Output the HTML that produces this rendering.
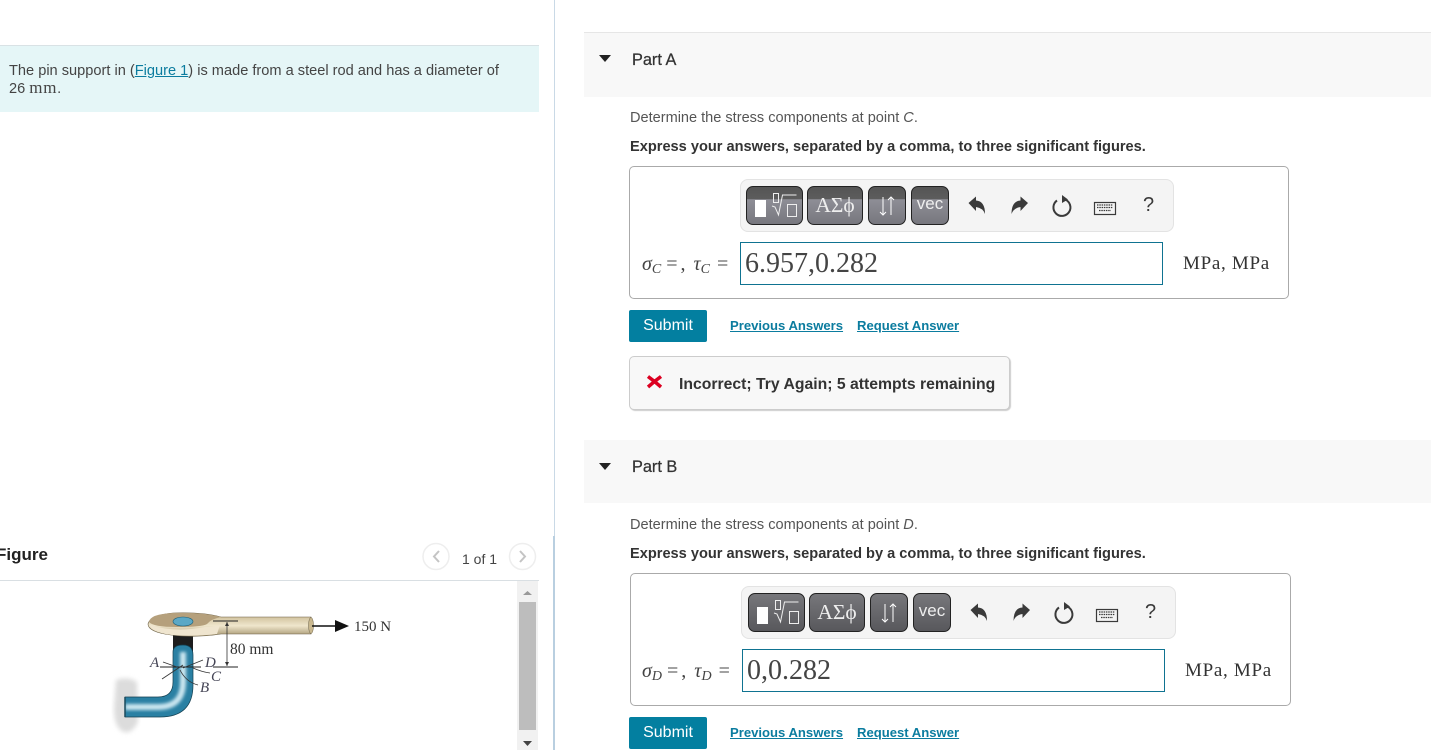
<!DOCTYPE html>
<html><head><meta charset="utf-8"><style>
html,body{margin:0;padding:0;background:#fff;overflow:hidden}
body{width:1431px;height:750px;position:relative;font-family:"Liberation Sans",sans-serif;color:#333}
.a{position:absolute;white-space:nowrap}
a{color:#0b7c9f;text-decoration:underline}
.hd{left:584px;width:847px;background:#f8f8f8}
.tri{width:0;height:0;border-left:6px solid transparent;border-right:6px solid transparent;border-top:7px solid #222}
.pt{font-size:16.3px;line-height:20px;color:#333;-webkit-text-stroke:.25px #333}
.det{font-size:14.56px;line-height:18px;color:#555}
.exp{font-size:14.6px;line-height:18px;font-weight:bold;color:#333}
.box{border:1px solid #aaa;border-radius:5px;background:#fff;box-sizing:border-box}
.tb{left:110px;top:12px;width:434px;height:53px;background:#f4f4f4;border:1px solid #e3e3e3;border-radius:8px;box-sizing:border-box}
.b{position:absolute;top:6px;height:39px;box-sizing:border-box;border:1px solid #222;border-radius:7px;background:linear-gradient(#555 0,#5c5c5c 32%,#8e8e96 34%,#77777e 100%);color:#eee;text-align:center}
.b2{background:linear-gradient(#77777b,#58585c)}
.inp{height:43px;border:1px solid #0f7391;box-sizing:border-box;background:#fff;font:28px/42px "Liberation Serif",serif;color:#444;padding-left:4px}
.lab{font:italic 20px/24px "Liberation Serif",serif;color:#444}
.lab sub{font-size:14px;vertical-align:-3px;line-height:0}
.lab i.n{font-style:normal}
.unit{font:19px/24px "Liberation Serif",serif;color:#333;letter-spacing:.7px}
.sub{left:629px;width:78px;height:32px;background:#037fa0;border-radius:2px;color:#fff;font-size:16px;line-height:32px;text-align:center}
.lk{font-size:13.1px;font-weight:bold;line-height:16px}
</style></head><body>

<div class="a" style="left:554px;top:0;width:1px;height:537px;background:#c9d9e6"></div>
<div class="a" style="left:553px;top:536px;width:2px;height:214px;background:#b9cfe0"></div>

<!-- left panel -->
<div class="a" style="left:0;top:45px;width:539px;height:67px;background:#e5f6f7;border-top:1px solid #d9e2e5;box-sizing:border-box"></div>
<div class="a" style="left:9px;top:62px;font-size:14.6px;line-height:18px;color:#444">The pin support in (<a>Figure 1</a>) is made from a steel rod and has a diameter of<br><span style="position:relative;top:-1px">26 <span style="font-family:'Liberation Serif',serif;font-size:17px;letter-spacing:.7px">mm</span>.</span></div>

<div class="a" style="left:-4px;top:545px;font-size:17px;line-height:20px;font-weight:bold;color:#222">Figure</div>
<div class="a" style="left:462px;top:550px;font-size:14px;line-height:18px;color:#444">1 of 1</div>
<svg class="a" style="left:0;top:530px" width="553" height="220" viewBox="0 530 553 220">
<defs>
<linearGradient id="rod" x1="0" x2="0" y1="0" y2="1"><stop offset="0" stop-color="#c4b28a"/><stop offset=".55" stop-color="#efe6cc"/><stop offset="1" stop-color="#a4946f"/></linearGradient>
<filter id="bl"><feGaussianBlur stdDeviation="2.500"/></filter>
<filter id="bs"><feGaussianBlur stdDeviation="1.500"/></filter>
</defs>
<circle cx="436" cy="556.500" r="13" fill="#fff" stroke="#eee" stroke-width="1.500"/>
<circle cx="522.500" cy="556.500" r="13" fill="#fff" stroke="#eee" stroke-width="1.500"/>
<path d="M439 551l-5 5.500 5 5.500" fill="none" stroke="#c4c4c4" stroke-width="2"/>
<path d="M520 551l5 5.500-5 5.500" fill="none" stroke="#c4c4c4" stroke-width="2"/>
<rect x="0" y="580" width="539" height="1" fill="#d9dfe3"/>
<rect x="517" y="581" width="21" height="169" fill="#f1f1f1"/>
<rect x="519" y="602" width="17" height="128" fill="#bdbdbd"/>
<path d="M523 595l4.500-4 4.500 4z" fill="#999"/>
<path d="M523 741h9l-4.500 5z" fill="#444"/>
<path d="M116 680q12-4 21 2l1 40q-6 12-14 10-10-4-10-24z" fill="#dcdcdc" filter="url(#bl)"/>
<path d="M173 634h20v34h-20z" fill="#1d1d1d"/>
<path d="M125 697H158Q173 697 173 682V652Q173 645 183 645Q193 645 193 655V685Q193 717 160 717H125z" fill="#2a80a3" stroke="#143f50" stroke-width=".7"/>
<path d="M125 707H158Q183 707 183 682V652" fill="none" stroke="#cbe6f0" stroke-width="6" filter="url(#bs)"/>
<path d="M125 697v20" stroke="#1c4a5c" stroke-width="1.500"/>
<path d="M148 624q2-9 25-11 30-1 48 4h90v17h-90q-25 4-50 1-23-3-23-11z" fill="url(#rod)" stroke="#6a5f45" stroke-width=".6"/>
<path d="M149 622q1-8 24-9 30-1 48 4-10 2-14 7-5 3-30 3-24 0-28-5z" fill="#b5a07c"/>
<path d="M150 625q25 8 55 2 8 0 15-2l-3 9q-25 3-45 1-22-3-22-10z" fill="#efe5cf"/>
<ellipse cx="311" cy="625.500" rx="2.500" ry="8" fill="#c9b88f" stroke="#6a5f45" stroke-width=".5"/>
<ellipse cx="183" cy="621.500" rx="10" ry="4.500" fill="#5aa8c6" stroke="#1d5f78" stroke-width=".6"/>
<path d="M312 626h24" stroke="#111" stroke-width="1.500"/><path d="M335 620l14 6-14 6z" fill="#111"/>
<path d="M213 621h25M160 667h41M213 667h25" stroke="#222" stroke-width="1"/>
<path d="M227 622v44" stroke="#333" stroke-width=".8"/>
<path d="M225 626l2-4 2 4zM225 662l2 4 2-4z" fill="#333"/>
<path d="M163 662l14 5M203 660l-20 8M210 673q-8-1-17-5M198 685q-12-3-18-15M162 679l21-14" fill="none" stroke="#333" stroke-width=".8"/>
<g font-family="Liberation Serif,serif" fill="#333">
<text x="354" y="631" font-size="15">150 N</text>
<text x="230" y="654" font-size="15.500">80 mm</text>
<g font-style="italic" font-size="15" fill="#445">
<text x="150" y="667">A</text><text x="205" y="667">D</text><text x="211" y="681">C</text><text x="200" y="692">B</text>
</g></g>
</svg>

<!-- Part A -->
<div class="a hd" style="top:32px;height:65px;border-top:1px solid #e6e6e6;box-sizing:border-box"></div>
<div class="a tri" style="left:599px;top:55px"></div>
<div class="a pt" style="left:632px;top:50px">Part A</div>
<div class="a det" style="left:630px;top:109px">Determine the stress components at point <i>C</i>.</div>
<div class="a exp" style="left:630px;top:138px">Express your answers, separated by a comma, to three significant figures.</div>

<div class="a box" style="left:629px;top:166px;width:660px;height:133px">
  <div class="a tb">
    <div class="b" style="left:5px;width:57px"><svg width="55" height="37" style="position:absolute;left:0;top:0" fill="none" stroke="#eee" stroke-width="1"><rect x="8" y="13" width="11" height="17" fill="#fff" stroke="none"/><rect x="26.500" y="6.500" width="5" height="9"/><path d="M25 19l3 1 3.500 8 4-20h14"/><rect x="40.500" y="17.500" width="9" height="12"/></svg></div>
    <div class="b" style="left:66px;width:56px;font:21.5px/36px 'Liberation Serif',serif">ΑΣϕ</div>
    <div class="b" style="left:127px;width:38px"><svg width="36" height="37" style="position:absolute;left:0;top:0" fill="none" stroke="#fff" stroke-width="1"><path d="M14 10v18M11 25l3 3 3-3M22 28v-18M19 13l3-3 3 3"/></svg></div>
    <div class="b" style="left:170px;width:38px;font-size:17px;line-height:34px">vec</div>
    <svg width="200" height="37" style="position:absolute;left:226px;top:7px" fill="#3a3a3a">
      <path d="M1.500 16L9 9.500v4q9 .5 9 13.500q-2-6-9-7v4z"/>
      <path d="M61 16L53.500 9.500v4q-9 .5-9 13.500q2-6 9-7v4z"/>
      <path d="M98 12.500A8.500 8.500 0 1 1 90 13.500" fill="none" stroke="#3a3a3a" stroke-width="2"/><path d="M95 8l6 4.500-6 3.500z"/>
      <rect x="127.500" y="15.500" width="21" height="12" fill="none" stroke="#3a3a3a" stroke-width="1.200"/><path d="M130 18h16M130 20.500h16M132 23.500h12" stroke="#3a3a3a" stroke-width="1.300" stroke-dasharray="1.500 .8"/>
    </svg>
    <div class="a" style="left:402px;top:13px;font-size:20px;line-height:24px;color:#3a3a3a">?</div>
  </div>
  <div class="a lab" style="left:12px;top:85px">σ<sub>C</sub><span style="margin-left:5px;letter-spacing:3px"><i class="n">=</i></span><i class="n">,</i><span style="margin-left:8px">τ</span><sub>C</sub><i class="n" style="margin-left:7px">=</i></div>
  <div class="a inp" style="left:110px;top:75px;width:423px">6.957,0.282</div>
  <div class="a unit" style="left:553px;top:85px">MPa, MPa</div>
</div>

<div class="a sub" style="top:310px">Submit</div>
<div class="a lk" style="left:730px;top:318px"><a>Previous Answers</a></div>
<div class="a lk" style="left:857px;top:318px"><a>Request Answer</a></div>

<div class="a" style="left:629px;top:356px;width:381px;height:54px;box-sizing:border-box;background:#f8f8f8;border:1px solid #ccc;border-radius:5px;box-shadow:1px 1px 1px #ccc"></div>
<svg class="a" style="left:646px;top:374px" width="17" height="16"><path d="M2 2.500l6.500 5L2 13M15 2.500L8.500 7.500 15 13" fill="none" stroke="#dc0021" stroke-width="3.500"/></svg>
<div class="a" style="left:679px;top:375px;font-size:15.75px;line-height:20px;font-weight:bold;color:#333">Incorrect; Try Again; 5 attempts remaining</div>

<!-- Part B -->
<div class="a hd" style="top:440px;height:63px"></div>
<div class="a tri" style="left:599px;top:463px"></div>
<div class="a pt" style="left:632px;top:457px">Part B</div>
<div class="a det" style="left:630px;top:516px">Determine the stress components at point <i>D</i>.</div>
<div class="a exp" style="left:630px;top:545px">Express your answers, separated by a comma, to three significant figures.</div>

<div class="a box" style="left:630px;top:573px;width:661px;height:133px">
  <div class="a tb" style="width:435px">
    <div class="b b2" style="left:6px;width:57px"><svg width="55" height="37" style="position:absolute;left:0;top:0" fill="none" stroke="#eee" stroke-width="1"><rect x="8" y="13" width="11" height="17" fill="#fff" stroke="none"/><rect x="26.500" y="6.500" width="5" height="9"/><path d="M25 19l3 1 3.500 8 4-20h14"/><rect x="40.500" y="17.500" width="9" height="12"/></svg></div>
    <div class="b b2" style="left:67px;width:56px;font:21.5px/36px 'Liberation Serif',serif">ΑΣϕ</div>
    <div class="b b2" style="left:128px;width:38px"><svg width="36" height="37" style="position:absolute;left:0;top:0" fill="none" stroke="#fff" stroke-width="1"><path d="M14 10v18M11 25l3 3 3-3M22 28v-18M19 13l3-3 3 3"/></svg></div>
    <div class="b b2" style="left:171px;width:38px;font-size:17px;line-height:34px">vec</div>
    <svg width="200" height="37" style="position:absolute;left:227px;top:7px" fill="#3a3a3a">
      <path d="M1.500 16L9 9.500v4q9 .5 9 13.500q-2-6-9-7v4z"/>
      <path d="M61 16L53.500 9.500v4q-9 .5-9 13.500q2-6 9-7v4z"/>
      <path d="M98 12.500A8.500 8.500 0 1 1 90 13.500" fill="none" stroke="#3a3a3a" stroke-width="2"/><path d="M95 8l6 4.500-6 3.500z"/>
      <rect x="127.500" y="15.500" width="21" height="12" fill="none" stroke="#3a3a3a" stroke-width="1.200"/><path d="M130 18h16M130 20.500h16M132 23.500h12" stroke="#3a3a3a" stroke-width="1.300" stroke-dasharray="1.500 .8"/>
    </svg>
    <div class="a" style="left:403px;top:13px;font-size:20px;line-height:24px;color:#3a3a3a">?</div>
  </div>
  <div class="a lab" style="left:11px;top:85px">σ<sub>D</sub><span style="margin-left:5px;letter-spacing:3px"><i class="n">=</i></span><i class="n">,</i><span style="margin-left:8px">τ</span><sub>D</sub><i class="n" style="margin-left:7px">=</i></div>
  <div class="a inp" style="left:111px;top:75px;width:423px">0,0.282</div>
  <div class="a unit" style="left:554px;top:85px">MPa, MPa</div>
</div>

<div class="a sub" style="top:717px">Submit</div>
<div class="a lk" style="left:730px;top:725px"><a>Previous Answers</a></div>
<div class="a lk" style="left:857px;top:725px"><a>Request Answer</a></div>
</body></html>
